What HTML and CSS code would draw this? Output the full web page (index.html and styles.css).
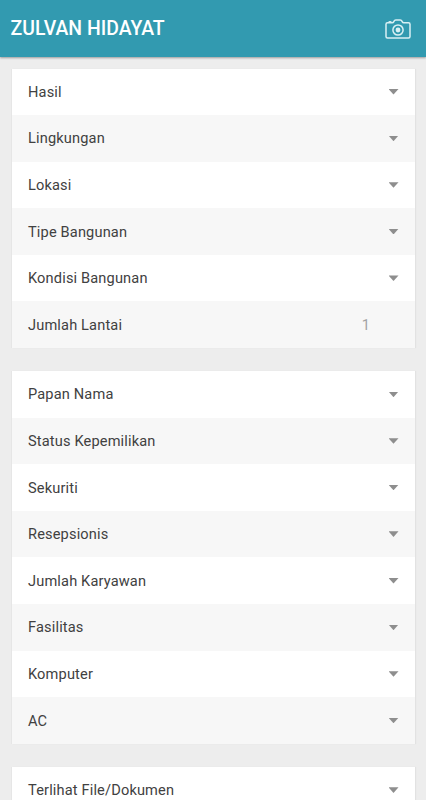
FILE: index.html
```html
<!DOCTYPE html>
<html lang="id">
<head>
    <meta charset="UTF-8">
    <meta name="viewport" content="width=device-width, initial-scale=1.0">
    <title>Zulvan Hidayat</title>
    <link rel="stylesheet" href="styles.css">
</head>
<body>
    <header class="app-bar">
        <h1>ZULVAN HIDAYAT</h1>
        <svg class="camera" viewBox="0 0 26 20" fill="none" stroke="currentColor" stroke-width="1.5" stroke-linejoin="round">
            <path d="M2.5 3.7H7.2Q8.3 3.7 8.8 2.6Q9.5 1 10.8 1H15.2Q16.5 1 17.2 2.6Q17.7 3.7 18.8 3.7H23.5Q25 3.7 25 5.2V17.5Q25 19 23.5 19H2.5Q1 19 1 17.5V5.2Q1 3.7 2.5 3.7Z"/>
            <path d="M3.6 2.8H6.4"/>
            <circle cx="13" cy="11" r="5.1"/>
            <circle cx="13" cy="11" r="2.4" fill="currentColor" stroke="none"/>
        </svg>
    </header>

    <main class="content">
        <section class="card">
            <div class="row"><span>Hasil</span><i class="arrow"></i></div>
            <div class="row"><span>Lingkungan</span><i class="arrow"></i></div>
            <div class="row"><span>Lokasi</span><i class="arrow"></i></div>
            <div class="row"><span>Tipe Bangunan</span><i class="arrow"></i></div>
            <div class="row"><span>Kondisi Bangunan</span><i class="arrow"></i></div>
            <div class="row"><span>Jumlah Lantai</span><span class="value">1</span></div>
        </section>

        <section class="card">
            <div class="row"><span>Papan Nama</span><i class="arrow"></i></div>
            <div class="row"><span>Status Kepemilikan</span><i class="arrow"></i></div>
            <div class="row"><span>Sekuriti</span><i class="arrow"></i></div>
            <div class="row"><span>Resepsionis</span><i class="arrow"></i></div>
            <div class="row"><span>Jumlah Karyawan</span><i class="arrow"></i></div>
            <div class="row"><span>Fasilitas</span><i class="arrow"></i></div>
            <div class="row"><span>Komputer</span><i class="arrow"></i></div>
            <div class="row"><span>AC</span><i class="arrow"></i></div>
        </section>

        <section class="card">
            <div class="row"><span>Terlihat File/Dokumen</span><i class="arrow"></i></div>
        </section>
    </main>
</body>
</html>
```
FILE: styles.css
```css
body, html {
    margin: 0;
    padding: 0;
    height: 100%;
    overflow: hidden;
    font-family: Roboto, sans-serif;
    background-color: #ededed;
}

.app-bar {
    display: flex;
    justify-content: space-between;
    align-items: center;
    box-sizing: border-box;
    height: 57px;
    padding: 0 15px 0 10.6px;
    color: #fff;
    background-color: #329ab0;
    box-shadow: 0 1px 2px rgba(0, 0, 0, 0.35);
}

.app-bar h1 {
    margin: 0;
    font-size: 19.4px;
    font-weight: 500;
}

.camera {
    width: 26px;
    height: 20px;
    color: #d9f0f4;
}

.content {
    display: flex;
    flex-direction: column;
    gap: 23px;
    padding: 11.5px 11px 0 12px;
}

.card {
    background-color: #fff;
    box-shadow: -1px 0 0 #e6e6e6, 1px 0 1px #e2e2e2;
}

.row {
    display: flex;
    justify-content: space-between;
    align-items: center;
    height: 46.6px;
    padding: 0 16.5px 0 16px;
    font-size: 14.6px;
    letter-spacing: 0.15px;
    color: #414141;
}

.row:nth-child(even) {
    background-color: #f7f7f7;
}

.arrow {
    width: 10px;
    height: 5.6px;
    background-color: #8e8e8e;
    clip-path: polygon(0 0, 100% 0, 50% 100%);
}

.value {
    margin-right: 28.5px;
    color: #a3a3a3;
}
```
